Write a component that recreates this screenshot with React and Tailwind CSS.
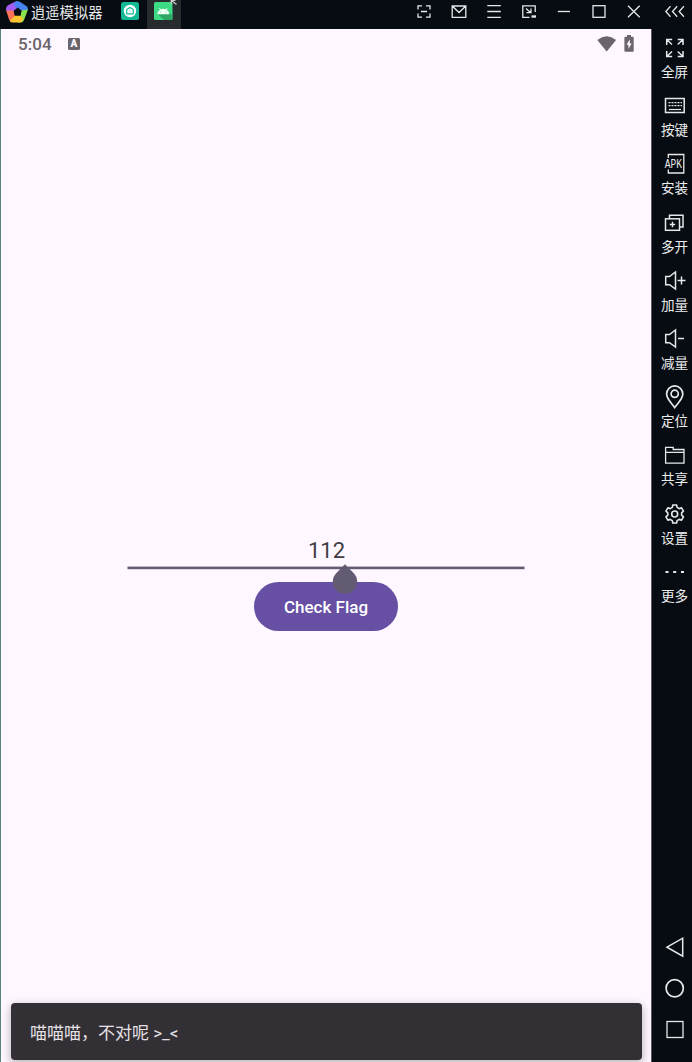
import React from "react";

function Icon({ children, w = 25, h = 24, sw = 1.5 }) {
  return (
    <svg
      width={w}
      height={h}
      viewBox={`0 0 ${w} ${h}`}
      fill="none"
      stroke="#e6e8e9"
      strokeWidth={sw}
      className="block shrink-0"
    >
      {children}
    </svg>
  );
}

// Outline of a six-toothed gear: each tooth is four points around its direction.
function gearPath(cx, cy) {
  const points = [];
  for (let i = 0; i < 6; i++) {
    const a = (i * Math.PI) / 3 - Math.PI / 2;
    const [ux, uy] = [Math.cos(a), Math.sin(a)];
    for (const [r, s] of [[6.6, -2.4], [9, -1.9], [9, 1.9], [6.6, 2.4]]) {
      points.push(`${(cx + ux * r - uy * s).toFixed(2)} ${(cy + uy * r + ux * s).toFixed(2)}`);
    }
  }
  return `M${points.join("L")}Z`;
}

const sideItems = [
  {
    label: "全屏",
    icon: (
      <path d="M4.7 9V3.5H10.2M4.7 3.5L10 8.5M15.7 3.5H21V9M21 3.5L15.7 8.5M4.7 15V20.5H10.2M4.7 20.5L10 15.5M15.7 20.5H21V15M21 20.5L15.7 15.5" />
    ),
  },
  {
    label: "按键",
    icon: (
      <>
        <rect x="3.5" y="4.5" width="18.7" height="14" strokeWidth="1.5" />
        <path d="M6.5 8.7H20M6.5 11.7H20" strokeDasharray="2 1" strokeWidth="1.2" />
        <path d="M7 15.5H19" strokeWidth="1.2" />
      </>
    ),
  },
  {
    label: "安装",
    icon: (
      <>
        <path d="M6.3 6V2.5H21.8V21H6.3V17.5" strokeWidth="1.3" />
        <text
          x="2.8"
          y="15.6"
          textLength="17.2"
          lengthAdjust="spacingAndGlyphs"
          fill="#e6e8e9"
          stroke="none"
          className="font-['Liberation_Mono',monospace] text-[12px]"
        >
          APK
        </text>
      </>
    ),
  },
  {
    label: "多开",
    icon: (
      <>
        <rect x="3.5" y="7.8" width="14" height="11.5" />
        <path d="M7.5 7.8V4.2H21V16H17.5M10.5 10.7V16.3M7.8 13.5H13.2" />
      </>
    ),
  },
  {
    label: "加量",
    icon: <path d="M3.7 7.5H7.5L13.5 3V20L7.5 15.7H3.7ZM15.5 11.5H23.5M19.5 7.5V15.5" />,
  },
  {
    label: "减量",
    icon: <path d="M3.7 7.5H7.5L13.5 3V20L7.5 15.7H3.7ZM16 11.5H22" />,
  },
  {
    label: "定位",
    icon: (
      <>
        <path d="M12.7 22.6C10 18.5 4.6 14 4.6 9A8.1 8.1 0 0 1 20.8 9C20.8 14 15.4 18.5 12.7 22.6Z" strokeWidth="1.7" />
        <circle cx="12.7" cy="8.8" r="3.6" strokeWidth="1.7" />
      </>
    ),
  },
  {
    label: "共享",
    icon: (
      <path d="M3.6 20.2V4.4H11.2V6.5H22V20.2ZM3.6 9.4H22" strokeWidth="1.3" />
    ),
  },
  {
    label: "设置",
    icon: (
      <>
        <path strokeLinejoin="round" strokeWidth="1.6" d={gearPath(12.7, 12)} />
        <circle cx="12.7" cy="12" r="3" strokeWidth="1.6" />
      </>
    ),
  },
  {
    label: "更多",
    icon: <path d="M3.5 12H6.5M11.2 12H14.2M19 12H22" strokeWidth="2" />,
  },
];

const windowIcons = [
  <path key="scan" d="M6.5 5.8H2.5V9.5M10.5 5.8H14.5V9.5M2.5 13.5V17.2H6.5M14.5 13.5V17.2H10.5M5.5 11.5H11.5" />,
  <path key="mail" d="M1.7 6H15.3V17.3H1.7ZM1.7 6L8.5 12.5L15.3 6" />,
  <path key="menu" d="M1.8 5.7H15.3M1.8 11.5H15.3M1.8 17.3H15.3" />,
  <g key="pip">
    <path d="M9 17.3H2.3V5.8H14.7V12M5.5 8.5L10 12.5M10.5 8.5V12.7H6" />
    <path d="M11 16.5H15.5" strokeWidth="2.4" />
  </g>,
  <path key="min" d="M2.3 11.5H14.5" />,
  <rect key="max" x="2.5" y="5.7" width="12" height="11.6" />,
  <path key="close" d="M2.5 5.7L14.2 17.3M14.2 5.7L2.5 17.3" />,
];

function Logo() {
  return (
    <svg width="24" height="24" viewBox="0 0 24 24" className="block shrink-0">
      <path d="M11.5 1L3.5 5Q0.5 7 1 10L2.5 13L8 14L9 11L13.5 8.5Z" fill="#a55cf2" />
      <path d="M11.5 1Q14 0.8 16 2.5L22 6.5Q23.5 8 22.7 10L15.5 11.5L12 8.5L8.5 4.5Z" fill="#4684f4" />
      <path d="M1.2 10.5L4.2 20Q5 22 7.5 22L12 21L9.5 15L8.5 10.5Z" fill="#fb7357" />
      <path d="M23 9.5L19 20Q18.2 22.5 15.5 22.5H12.5L15.5 15.5L16 10.5Z" fill="#8be44d" />
      <path d="M4.8 21Q5.5 22.5 8 22.5H15.5L18.5 19L15 15.5H10Z" fill="#fbc52f" />
      <path d="M12.7 7.6L16.8 10.7L15.3 15.6H10.2L8.7 10.7Z" fill="#080d13" />
    </svg>
  );
}

function TitleBar() {
  return (
    <header className="flex h-[29px] shrink-0 bg-[#070c12]">
      <div className="flex h-6 w-[121px] shrink-0 items-center pl-[5px]">
        <Logo />
        <span className="-mt-px ml-[2px] whitespace-nowrap font-['Noto_Sans_CJK_SC',sans-serif] text-[14.3px] leading-[22px] text-[#e6e7e8]">
          逍遥模拟器
        </span>
      </div>
      <svg width="18" height="18" viewBox="0 0 18 18" className="mt-[2px] block shrink-0">
        <rect width="18" height="18" rx="2.5" fill="#13b895" />
        <circle cx="9" cy="9" r="6.2" fill="#fff" />
        <path d="M9 5.4L12.3 7.6V11.8H5.7V7.6Z" fill="none" stroke="#13b895" strokeWidth="1.2" strokeLinejoin="round" />
        <circle cx="9" cy="9.2" r="1.4" fill="#d3f2ea" />
      </svg>
      <div className="ml-2 flex h-[29px] w-[34px] shrink-0 bg-[#272b2e]">
        <svg width="34" height="24" viewBox="0 0 34 24" className="block">
          <rect x="7" y="2" width="18.5" height="18" rx="1.5" fill="#3ddc84" />
          <path d="M10.5 14L17 20H24Q25.5 20 25.5 18.5V16L21.5 12Z" fill="#2fa866" />
          <path d="M10.3 14.2A6 5.4 0 0 1 22.3 14.2Z" fill="#f4fff8" />
          <path d="M12.4 8L13.7 10M20.2 8L18.9 10" stroke="#f4fff8" strokeWidth="0.9" />
          <circle cx="13.8" cy="12" r="0.6" fill="#3ddc84" />
          <circle cx="18.8" cy="12" r="0.6" fill="#3ddc84" />
          <path d="M24.2 4.2V0.3H28.5M24.5 0.5L29.5 4.5" fill="none" stroke="#c9cccd" strokeWidth="1.2" />
        </svg>
      </div>
      <div className="ml-auto flex">
        {windowIcons.map((icon, i) => (
          <div key={i} className="flex w-[35px] justify-center">
            <Icon w={17} h={24} sw={1.3}>
              <g transform="translate(-0.5 0)">{icon}</g>
            </Icon>
          </div>
        ))}
        <div className="flex w-10 pl-[10px]">
          <Icon w={25} h={24} sw={1.3}>
            <path d="M8.5 6.3L3.8 11.5L8.5 16.7M15.2 6.3L10.5 11.5L15.2 16.7M21.9 6.3L17.2 11.5L21.9 16.7" />
          </Icon>
        </div>
      </div>
    </header>
  );
}

function StatusBar() {
  return (
    <div className="flex h-[30px] shrink-0 items-center pl-[17px] pr-[17px] text-[#69656b]">
      <span className="w-[50px] font-[Roboto,sans-serif] text-[17px] font-medium leading-[30px] tracking-[0.1px]">5:04</span>
      <span className="flex h-[12px] w-[12px] items-center justify-center rounded-[1.5px] bg-[#69656b] font-[Roboto,sans-serif] text-[10px] font-black leading-none text-[#fef7ff]">
        A
      </span>
      <svg width="20" height="16" viewBox="0 0 20 16" className="-mt-px ml-auto block">
        <path d="M0.3 3.9Q9.7 -3.4 19.1 3.9L9.7 15.4Z" fill="#69656b" />
      </svg>
      <svg width="10" height="17" viewBox="0 0 10 17" className="-mt-[2px] ml-[7px] block">
        <path d="M3 0H7V1.7H8.8Q9.7 1.7 9.7 2.7V15.8Q9.7 16.8 8.8 16.8H1.3Q0.4 16.8 0.4 15.8V2.7Q0.4 1.7 1.3 1.7H3Z" fill="#69656b" />
        <path d="M5.8 4.2L2.5 9.7H4.4V14L7.7 8.5H5.8Z" fill="#fef7ff" />
      </svg>
    </div>
  );
}

function Sidebar() {
  return (
    <aside className="flex w-10 shrink-0 flex-col bg-[#070c12] pl-[5px] pt-[7px]">
      {sideItems.map((item) => (
        <div key={item.label} className="flex h-[58.2px] shrink-0 flex-col items-center">
          <Icon>{item.icon}</Icon>
          <span className="whitespace-nowrap font-['Noto_Sans_CJK_SC',sans-serif] text-[13.6px] leading-[22px] text-[#eceded]">
            {item.label}
          </span>
        </div>
      ))}
      <nav className="mt-auto flex flex-col items-center gap-[17px] pb-[21px]">
        <Icon>
          <path d="M5 12.2L20.7 3.2V21.2Z" />
        </Icon>
        <Icon>
          <circle cx="12.7" cy="12.3" r="8.6" strokeWidth="1.7" />
        </Icon>
        <Icon>
          <rect x="5" y="4.5" width="16" height="16" strokeWidth="1.3" />
        </Icon>
      </nav>
    </aside>
  );
}

export default function App() {
  return (
    <div className="flex h-[1062px] w-[692px] flex-col overflow-hidden bg-[#070c12]">
      <TitleBar />
      <div className="flex min-h-0 flex-1">
        <main className="flex w-[652px] shrink-0 flex-col border-l border-r border-l-[#56857c] border-r-[#5d5b61] bg-[#fef7ff]">
          <StatusBar />
          <section className="mt-[474px] flex flex-col items-center">
            <div className="relative flex h-[36px] w-[397px] justify-center">
              <span className="mt-[5px] pl-px font-[Roboto,sans-serif] text-[22px] leading-[26px] text-[#403c43]">112</span>
              <svg width="398" height="4" viewBox="0 0 398 4" className="absolute -left-px top-[33px] block">
                <rect x="0.5" y="0.6" width="397" height="2.6" fill="#625b71" />
              </svg>
              <svg width="26" height="31" viewBox="0 0 26 31" className="absolute left-[204px] top-[31px] z-10 block">
                <path d="M13 0.3L21.6 8.9A12.2 12.2 0 1 1 4.4 8.9Z" fill="#625b71" />
              </svg>
            </div>
            <button className="mt-[13px] h-[49px] w-[143.4px] rounded-full bg-[#6750a4] pt-px font-[Roboto,sans-serif] text-[17px] font-medium leading-[49px] text-white">
              Check Flag
            </button>
          </section>
          <div className="mx-[9.5px] mb-[2px] mt-auto flex h-[57px] items-center rounded-[4px] bg-[#333035] pl-[19.5px] shadow-[0_3px_8px_1px_rgba(0,0,0,0.25)]">
            <span className="pt-[2px] font-[Roboto,'Noto_Sans_CJK_SC',sans-serif] text-[17px] leading-6 text-[#e6e1e6]">
              喵喵喵，不对呢 &gt;_&lt;
            </span>
          </div>
        </main>
        <Sidebar />
      </div>
    </div>
  );
}
